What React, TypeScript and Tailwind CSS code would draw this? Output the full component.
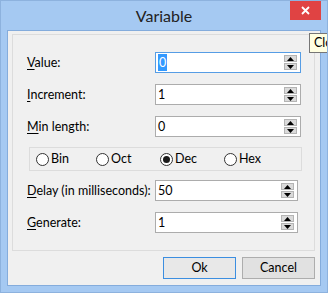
const font = "font-['Lato','Noto_Sans',sans-serif]"

const Spin = ({ value, wide, focused }: { value: string; wide?: boolean; focused?: boolean }) => (
    <div
        className={`flex items-center h-[21px] border bg-white ${wide ? 'w-[146px]' : 'w-[143px]'} ${focused ? 'border-[#569de5]' : 'border-[#acacac]'}`}
    >
        <div className="flex-1 pl-[2px] text-[12.5px] leading-[19px] text-[#000]">
            {focused ? <span className="inline-block bg-[#3399ff] text-white px-[1px] leading-[17px]">{value}</span> : value}
        </div>
        <div className="flex flex-col gap-[1px] mr-[3px]">
            <div className="w-[13px] h-[7px] bg-[#dadada] border border-[#b4b4b4] flex items-center justify-center">
                <svg width="7" height="4" viewBox="0 0 7 4"><path d="M3.5 0 L7 4 L0 4 Z" fill="#000" /></svg>
            </div>
            <div className="w-[13px] h-[7px] bg-[#dadada] border border-[#b4b4b4] flex items-center justify-center">
                <svg width="7" height="4" viewBox="0 0 7 4"><path d="M0 0 L7 0 L3.5 4 Z" fill="#000" /></svg>
            </div>
        </div>
    </div>
)

const Row = ({ label, u, value, wide, focused }: { label: string; u: string; value: string; wide?: boolean; focused?: boolean }) => (
    <div className="flex items-center h-[21px]">
        <div className="w-[128px] text-[12.5px] text-[#000] whitespace-nowrap mt-[2px]">
            <span className="underline underline-offset-2">{u}</span>{label}
        </div>
        <Spin value={value} wide={wide} focused={focused} />
    </div>
)

const Radio = ({ label, checked, w }: { label: string; checked?: boolean; w: string }) => (
    <div className={`flex items-center ${w}`}>
        <div className="w-[13px] h-[13px] rounded-full border border-[#333] bg-white flex items-center justify-center">
            {checked && <div className="w-[7px] h-[7px] rounded-full bg-[#1a1a1a]" />}
        </div>
        <span className="ml-[2px] text-[12.5px] text-[#000]">{label}</span>
    </div>
)

const App = () => {
    return (
        <div className={`relative w-[328px] h-[293px] overflow-hidden bg-[#a5c9f2] border border-[#8db2de] ${font}`}>
            {/* title bar */}
            <div className="relative h-[29px] flex items-center justify-center">
                <span className="text-[16px] text-[#222] mt-[1px]">Variable</span>
                <div className="absolute right-[6px] top-[-1px] w-[31px] h-[20px] bg-[#e04343] flex items-center justify-center">
                    <svg width="9" height="9" viewBox="0 0 9 9">
                        <path d="M1 1 L8 8 M8 1 L1 8" stroke="#fff" strokeWidth="1.8" />
                    </svg>
                </div>
            </div>

            {/* client */}
            <div className="ml-[6px] w-[314px] h-[256px] border border-[#84acdc] bg-[#f0f0f0] flex flex-col">
                <div className="ml-[4px] mt-[3px] w-[303px] h-[217px] border border-[#dcdcdc] flex flex-col pt-[17px] pl-[14px]">
                    <div className="flex flex-col gap-[11px]">
                        <Row u="V" label="alue:" value="0" wide focused />
                        <Row u="I" label="ncrement:" value="1" wide />
                        <Row u="M" label="in length:" value="0" wide />
                    </div>
                    <div className="ml-[2px] mt-[10px] w-[273px] h-[24px] border border-[#dcdcdc] flex items-center pl-[6px]">
                        <Radio label="Bin" w="w-[60px]" />
                        <Radio label="Oct" w="w-[64px]" />
                        <Radio label="Dec" w="w-[64px]" checked />
                        <Radio label="Hex" w="w-[64px]" />
                    </div>
                    <div className="mt-[9px] flex flex-col gap-[11px]">
                        <Row u="D" label="elay (in milliseconds):" value="50" />
                        <Row u="G" label="enerate:" value="1" />
                    </div>
                </div>
                <div className="flex justify-end gap-[6px] mt-[6px] mr-[5px]">
                    <button className="w-[73px] h-[22px] border border-[#3c8ee0] bg-[#e8e8e8] text-[12.5px] text-[#000]">Ok</button>
                    <button className="w-[73px] h-[22px] border border-[#adadad] bg-[#e1e1e1] text-[12.5px] text-[#000]">Cancel</button>
                </div>
            </div>

            {/* tooltip */}
            <div className="absolute left-[308px] top-[32px] h-[20px] border border-[#767676] bg-[#ffffe1] px-[4px] text-[12.5px] leading-[18px] text-[#000] whitespace-nowrap">
                Close
            </div>
        </div>
    )
}

export default App
